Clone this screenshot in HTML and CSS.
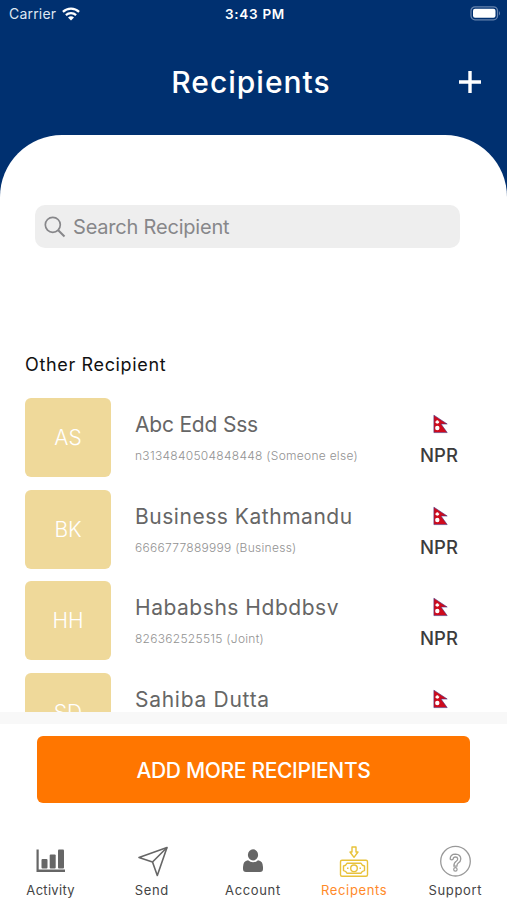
FILE: index.html
```
<!DOCTYPE html>
<html lang="en">
<head>
    <meta charset="UTF-8">
    <meta name="viewport" content="width=device-width, initial-scale=1.0">
    <title>Recipients</title>
    <link rel="stylesheet" href="styles.css">
</head>
<body>
    <svg width="0" height="0" class="defs">
        <symbol id="flag" viewBox="0 0 16 20">
            <path d="M1.9 1.2 L15.2 10 H9 L15.2 18.6 H1.9 Z" fill="#cf0a1c"/>
            <path d="M1.9 1.2 L15.2 10 H9 L15.2 18.6 H1.9 Z" fill="none" stroke="#4a3482" stroke-width="0.6"/>
            <path d="M3.2 7.6 a2.1 2.1 0 0 0 4.2 0 Z" fill="#fff"/>
            <circle cx="5.3" cy="7.4" r="1.2" fill="#fff"/>
            <circle cx="5.3" cy="14" r="2.2" fill="#fff"/>
        </symbol>
    </svg>

    <div class="status-bar">
        <div class="carrier">
            <span>Carrier</span>
            <svg width="18" height="14" viewBox="0 0 18 14" fill="none" stroke="#fff" stroke-width="2.2">
                <path d="M0.9 4.9 A11.6 11.6 0 0 1 17.1 4.9"/>
                <path d="M3.9 8.1 A7.4 7.4 0 0 1 14.1 8.1"/>
                <path d="M9 13.6 L6 10.6 A4.3 4.3 0 0 1 12 10.6 Z" fill="#fff" stroke="none"/>
            </svg>
        </div>
        <div class="time">3:43 PM</div>
        <div class="battery">
            <svg width="31" height="15" viewBox="0 0 31 15">
                <rect x="1" y="0.8" width="26.5" height="13" rx="4" fill="none" stroke="#6683ad" stroke-width="1.3"/>
                <rect x="3" y="2.8" width="22.5" height="9" rx="2" fill="#fff"/>
                <path d="M29 5 q2 2.3 0 4.6 Z" fill="#6683ad"/>
            </svg>
        </div>
    </div>

    <div class="header">
        <h1>Recipients</h1>
        <svg class="plus" width="22" height="22" viewBox="0 0 22 22" stroke="#fff" stroke-width="3.4">
            <path d="M11 0 V22 M0 11 H22"/>
        </svg>
    </div>

    <div class="panel">
        <div class="search">
            <svg width="22" height="22" viewBox="0 0 22 22" fill="none" stroke="#87878a" stroke-width="1.7">
                <circle cx="8.8" cy="8.8" r="7.5"/>
                <path d="M14.2 14.2 L20.5 20.5" stroke-width="2"/>
            </svg>
            <span>Search Recipient</span>
        </div>

        <h2>Other Recipient</h2>

        <div class="list">
            <div class="recipient">
                <div class="avatar">AS</div>
                <div class="info">
                    <div class="name short">Abc Edd Sss</div>
                    <div class="number">n3134840504848448 (Someone else)</div>
                </div>
                <div class="currency">
                    <svg width="16" height="20"><use href="#flag"/></svg>
                    <span>NPR</span>
                </div>
            </div>
            <div class="recipient">
                <div class="avatar">BK</div>
                <div class="info">
                    <div class="name">Business Kathmandu</div>
                    <div class="number">6666777889999 (Business)</div>
                </div>
                <div class="currency">
                    <svg width="16" height="20"><use href="#flag"/></svg>
                    <span>NPR</span>
                </div>
            </div>
            <div class="recipient">
                <div class="avatar">HH</div>
                <div class="info">
                    <div class="name">Hababshs Hdbdbsv</div>
                    <div class="number">826362525515 (Joint)</div>
                </div>
                <div class="currency">
                    <svg width="16" height="20"><use href="#flag"/></svg>
                    <span>NPR</span>
                </div>
            </div>
            <div class="recipient">
                <div class="avatar">SD</div>
                <div class="info">
                    <div class="name wide">Sahiba Dutta</div>
                </div>
                <div class="currency">
                    <svg width="16" height="20"><use href="#flag"/></svg>
                </div>
            </div>
        </div>

        <div class="divider"></div>
        <button class="add-btn">ADD MORE RECIPIENTS</button>
    </div>

    <nav class="tabs">
        <div class="tab">
            <svg width="32" height="32" viewBox="0 0 32 32" fill="#666">
                <path d="M1.5 4.5 H3.7 V24.5 H30 V27 H1.5 Z"/>
                <rect x="6.5" y="14" width="6" height="9.5" rx="1"/>
                <rect x="14.7" y="9.5" width="6" height="14" rx="1"/>
                <rect x="23" y="4.5" width="6" height="19" rx="1"/>
            </svg>
            <span class="tight">Activity</span>
        </div>
        <div class="tab">
            <svg width="32" height="32" viewBox="0 0 32 32" fill="none" stroke="#666" stroke-width="1.6" stroke-linejoin="round">
                <path d="M31 2.5 L3 12.5 L16.5 17 L21.3 30.5 Z"/>
                <path d="M16.5 17 L31 2.5"/>
            </svg>
            <span>Send</span>
        </div>
        <div class="tab">
            <svg width="32" height="32" viewBox="0 0 32 32" fill="#666">
                <ellipse cx="16" cy="9.9" rx="5.1" ry="5.6"/>
                <path d="M11 15.2 Q6 16 6 22 V24 Q6 27 9 27 H23 Q26 27 26 24 V22 Q26 16 21 15.2 Q16 19.5 11 15.2 Z"/>
            </svg>
            <span>Account</span>
        </div>
        <div class="tab active">
            <svg width="32" height="32" viewBox="0 0 32 32" fill="none" stroke="#e8c23a" stroke-width="1.4" stroke-linejoin="round">
                <path d="M14 2 H18 V7 H20 L16 12.3 L12 7 H14 Z"/>
                <rect x="2.5" y="15.3" width="27" height="16" rx="1.5"/>
                <path d="M9 18.3 H23 Q23.8 20.5 26.5 21 V25.6 Q23.8 26.1 23 28.3 H9 Q8.2 26.1 5.5 25.6 V21 Q8.2 20.5 9 18.3 Z"/>
                <circle cx="16" cy="23.3" r="3.3"/>
                <path d="M9 23.3 H10.5 M21.5 23.3 H23"/>
            </svg>
            <span>Recipents</span>
        </div>
        <div class="tab">
            <svg width="32" height="32" viewBox="0 0 32 32" fill="none" stroke="#999">
                <circle cx="16.5" cy="16.2" r="14.8" stroke-width="1.3"/>
                <path d="M11.2 14 Q11 9.2 16.5 9.2 Q21.8 9.4 21.8 14 Q21.7 16.6 19.3 18 Q17.9 19 17.9 21.2 H14.9 Q14.8 17.8 17.2 16.3 Q18.8 15.2 18.7 13.9 Q18.5 12 16.5 12 Q14.3 12 14.2 14 Q12.7 15.6 11.2 14 Z" stroke-width="1.3"/>
                <circle cx="16.4" cy="24.4" r="1.7" stroke-width="1.2"/>
            </svg>
            <span>Support</span>
        </div>
    </nav>
</body>
</html>
```
FILE: styles.css
```
:root {
    --navy: #003070;
    --orange: #ff7600;
    --sand: #efd99a;
}

* {
    box-sizing: border-box;
    margin: 0;
    padding: 0;
}

body {
    width: 507px;
    height: 900px;
    overflow: hidden;
    font-family: Inter, "Liberation Sans", sans-serif;
    background: var(--navy);
    display: flex;
    flex-direction: column;
}

svg {
    display: block;
    flex: none;
}

.defs {
    display: none;
}

.status-bar {
    display: grid;
    grid-template-columns: 1fr auto 1fr;
    align-items: center;
    height: 27px;
    padding: 0 6px 0 9px;
    color: #fff;
    font-size: 14px;
}

.carrier {
    display: flex;
    align-items: center;
    gap: 6px;
    letter-spacing: 0.2px;
}

.carrier span {
    color: #dfe7f2;
}

.time {
    font-weight: 600;
    font-size: 13.5px;
    letter-spacing: 0.7px;
}

.battery {
    justify-self: end;
}

.header {
    display: grid;
    grid-template-columns: 1fr auto 1fr;
    align-items: center;
    height: 108px;
    padding: 2px 26px 0 21px;
    color: #fff;
}

.header h1 {
    grid-column: 2;
    font-size: 30px;
    font-weight: 500;
    letter-spacing: 1px;
}

.plus {
    justify-self: end;
}

.panel {
    height: 695px;
    background: #fff;
    border-radius: 62px 62px 0 0;
    padding-top: 70px;
    flex: none;
}

.search {
    display: flex;
    align-items: center;
    gap: 7px;
    width: 425px;
    height: 43px;
    margin-left: 35px;
    padding-left: 9px;
    border-radius: 10px;
    background: #eee;
    color: #87878a;
    font-size: 20px;
    letter-spacing: -0.2px;
}

.panel h2 {
    margin: 105px 0 0 25px;
    height: 23px;
    line-height: 23px;
    font-size: 18px;
    font-weight: 400;
    letter-spacing: 0.65px;
    color: #111;
}

.list {
    height: 336px;
    padding: 22px 41px 0 25px;
    overflow: hidden;
}

.recipient {
    display: flex;
    height: 79px;
    margin-bottom: 12.67px;
}

.avatar {
    width: 86px;
    height: 79px;
    line-height: 80px;
    border-radius: 6px;
    background: var(--sand);
    color: #fff;
    font-size: 21px;
    font-weight: 300;
    text-align: center;
}

.info {
    flex: 1;
    padding: 11px 0 0 24px;
    white-space: nowrap;
}

.name {
    height: 30px;
    line-height: 31px;
    font-size: 21px;
    letter-spacing: 0.53px;
    color: #666;
}

.name.short {
    letter-spacing: -0.2px;
}

.name.wide {
    letter-spacing: 0.72px;
}

.number {
    height: 20px;
    margin-top: 6px;
    line-height: 21px;
    font-size: 12px;
    font-weight: 300;
    letter-spacing: 0.28px;
    color: #929292;
}

.currency {
    display: flex;
    flex-direction: column;
    align-items: center;
    width: 54px;
    padding-top: 16px;
    font-size: 18.5px;
    font-weight: 500;
    color: #3c3c3c;
}

.currency svg {
    margin-left: 2px;
}

.currency span {
    margin-top: 9px;
    line-height: 24px;
}

.divider {
    height: 12px;
    background: #f8f8f8;
}

.add-btn {
    display: block;
    width: 433px;
    height: 67px;
    margin: 12px 0 0 37px;
    padding-top: 2px;
    border: none;
    border-radius: 6px;
    background: var(--orange);
    color: #fff;
    font-family: inherit;
    font-size: 21px;
    font-weight: 500;
    letter-spacing: -0.33px;
}

.tabs {
    display: grid;
    grid-template-columns: repeat(5, 101.2px);
    flex: 1;
    padding-top: 15px;
    background: #fff;
}

.tab {
    display: flex;
    flex-direction: column;
    align-items: center;
    font-size: 13px;
    color: #444;
}

.tab span {
    margin-top: 4px;
    line-height: 18px;
    letter-spacing: 0.65px;
}

.tab .tight {
    letter-spacing: 0.3px;
}

.tab.active {
    color: #ff8a2a;
}
```
